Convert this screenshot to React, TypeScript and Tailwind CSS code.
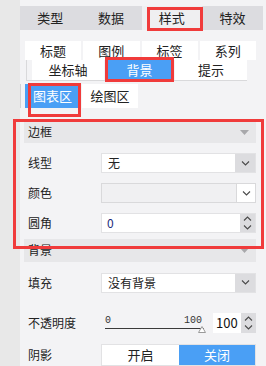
import React from "react";

const font = { fontFamily: '"Noto Sans CJK SC", "Noto Sans", sans-serif' };

const Chevron = ({ up = false }: { up?: boolean }) => (
  <svg width="9" height="5" viewBox="0 0 9 5" className="block">
    <polyline
      points={up ? "1,4.5 4.5,1 8,4.5" : "1,0.5 4.5,4 8,0.5"}
      fill="none"
      stroke="#4a4a4a"
      strokeWidth="1.1"
    />
  </svg>
);

const Caret = () => (
  <svg width="9" height="5" viewBox="0 0 9 5" className="block">
    <polygon points="0,0 9,0 4.5,5" fill="#a8a8ab" />
  </svg>
);

const Select = ({ value }: { value: string }) => (
  <div className="flex h-full flex-1 border border-[#e2e2e4] bg-white">
    <div className="flex flex-1 items-center pl-[6px] text-[12px] text-[#222]">{value}</div>
    <div className="flex w-[20px] items-center justify-center bg-[#dcdcdf]">
      <Chevron />
    </div>
  </div>
);

const Spinner = () => (
  <div className="flex w-[15px] flex-col items-center justify-center gap-[4px] bg-[#dcdcdf]">
    <Chevron up />
    <Chevron />
  </div>
);

const Row = ({ label, children, className = "" }: { label: string; children: React.ReactNode; className?: string }) => (
  <div className={`ml-[4px] flex w-[232px] items-center pl-[4px] ${className}`}>
    <div className="w-[73px] text-[12px] text-[#222]">{label}</div>
    {children}
  </div>
);

const Header = ({ title, className = "" }: { title: string; className?: string }) => (
  <div className={`ml-[4px] flex w-[232px] items-center justify-between bg-[#e7e7e9] pl-[4px] pr-[7px] text-[12px] text-[#222] ${className}`}>
    <span>{title}</span>
    <Caret />
  </div>
);

export default function App() {
  return (
    <div className="relative flex h-[366px] w-[266px] overflow-hidden bg-[#e8e8e8]" style={font}>
      <div className="w-[20px]" />

      <div className="flex w-[246px] flex-col bg-[#f3f3f5] pt-[6px]">
        {/* main tabs */}
        <div className="flex h-[24px] w-[243px] bg-[#dcdce0] text-[13px] text-[#222]">
          <div className="flex flex-1 items-center justify-center">类型</div>
          <div className="flex flex-1 items-center justify-center">数据</div>
          <div className="flex flex-1 items-center justify-center bg-[#efeff1]">样式</div>
          <div className="flex flex-1 items-center justify-center">特效</div>
        </div>

        {/* sub tabs */}
        <div className="ml-[5px] mt-[11px] flex h-[20px] w-[231px] gap-[2px] text-[13px] text-[#222]">
          {["标题", "图例", "标签", "系列"].map((t) => (
            <div key={t} className="flex flex-1 items-center justify-center bg-white">{t}</div>
          ))}
        </div>
        <div className="ml-[6px] flex h-[21px] w-[221px] gap-[1px] border-b border-l border-[#d9d9db] pl-[5px] text-[13px] text-[#222]">
          <div className="flex w-[72px] items-center justify-center bg-white">坐标轴</div>
          <div className="flex w-[69px] items-center justify-center bg-[#4a9ff5] text-white">背景</div>
          <div className="flex w-[72px] items-center justify-center bg-white">提示</div>
        </div>

        <div className="mt-[3px] flex h-[24px] gap-[2px] border-l border-[#d2d2d4] pl-[4px] text-[13px]">
          <div className="flex w-[55px] items-center justify-center bg-[#4a9ff5] text-white">图表区</div>
          <div className="flex w-[56px] items-center justify-center bg-white text-[#222]">绘图区</div>
        </div>

        {/* border section */}
        <Header title="边框" className="mt-[14px] h-[22px]" />

        <Row label="线型" className="mt-[10px] h-[20px]">
          <Select value="无" />
        </Row>

        <Row label="颜色" className="mt-[10px] h-[20px]">
          <div className="flex h-full flex-1 border border-[#d9d9db] bg-[#f0f0f2]">
            <div className="flex-1" />
            <div className="flex w-[19px] items-center justify-center border-l border-[#d9d9db] bg-white">
              <Chevron />
            </div>
          </div>
        </Row>

        <Row label="圆角" className="mt-[10px] h-[20px]">
          <div className="flex h-full flex-1 border border-[#e2e2e4] bg-white">
            <div className="flex flex-1 items-center pl-[5px] text-[12px] text-[#1c2a7a]">0</div>
            <Spinner />
          </div>
        </Row>

        {/* background section */}
        <Header title="背景" className="mt-[6px] h-[23px]" />

        <Row label="填充" className="mt-[11px] h-[20px]">
          <Select value="没有背景" />
        </Row>

        <Row label="不透明度" className="mt-[20px] h-[21px]">
          <div className="flex h-full flex-1">
            <div className="relative flex w-[108px] flex-col pl-[4px]">
              <div className="flex h-[13px] w-[97px] items-end justify-between font-['Liberation_Mono'] text-[10px] leading-none text-[#333]">
                <span>0</span>
                <span>100</span>
              </div>
              <div className="mt-[2px] h-px w-[99px] bg-[#3a3a3a]" />
              <svg width="8" height="7" viewBox="0 0 8 7" className="absolute left-[97px] top-[13px]">
                <polygon points="4,0.5 7.5,6.5 0.5,6.5" fill="#fff" stroke="#9a9a9a" strokeWidth="1" />
              </svg>
            </div>
            <div className="ml-[4px] flex flex-1 bg-white">
              <div className="flex flex-1 items-center pl-[3px] text-[13px] text-[#111]">100</div>
              <Spinner />
            </div>
          </div>
        </Row>

        <Row label="阴影" className="mt-[11px] h-[22px]">
          <div className="flex h-full flex-1 border border-[#e2e2e4] bg-white text-[13px]">
            <div className="flex flex-1 items-center justify-center text-[#222]">开启</div>
            <div className="flex w-[76px] items-center justify-center bg-[#4a9ff5] text-white">关闭</div>
          </div>
        </Row>
      </div>

      {/* red annotation boxes */}
      <div className="absolute left-[147px] top-[7px] h-[24px] w-[56px] border-[3px] border-[#f03b3b]" />
      <div className="absolute left-[105px] top-[57px] h-[25px] w-[69px] border-[3px] border-[#f03b3b]" />
      <div className="absolute left-[28px] top-[83px] h-[34px] w-[53px] border-[3px] border-[#f03b3b]" />
      <div className="absolute left-[13px] top-[119px] h-[130px] w-[251px] border-[3px] border-[#f03b3b]" />
    </div>
  );
}
